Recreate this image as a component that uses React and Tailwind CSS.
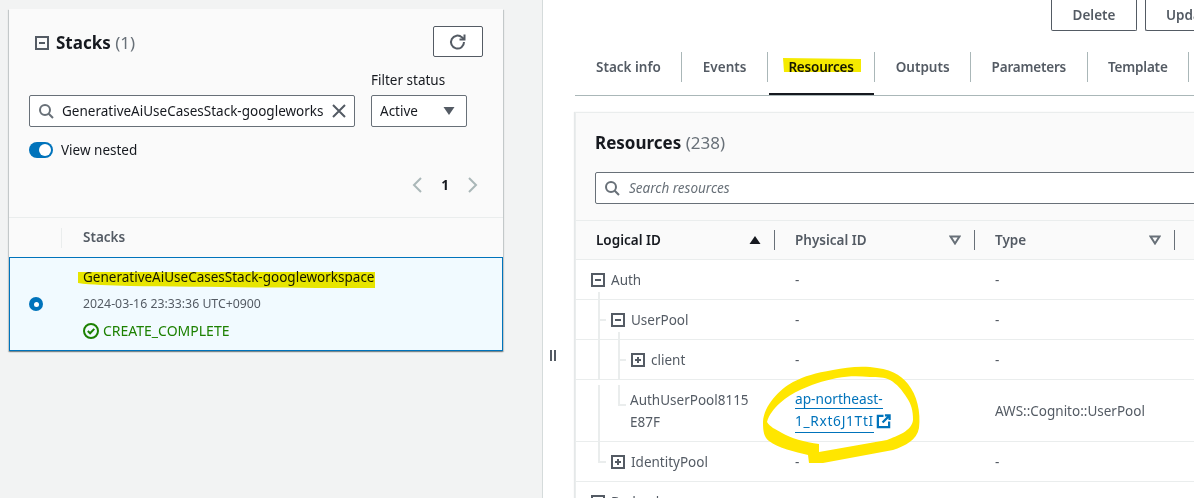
import React from "react";

const Expander = ({ open }) => (
  <svg width="14" height="14" viewBox="0 0 14 14" className="shrink-0">
    <rect x="1" y="1" width="12" height="12" fill="none" stroke="#545b64" strokeWidth="2" />
    <path d={open ? "M4 7h6" : "M4 7h6M7 4v6"} stroke="#545b64" strokeWidth="2" />
  </svg>
);

const SearchIcon = () => (
  <svg width="16" height="16" viewBox="0 0 16 16" fill="none" stroke="#687078" strokeWidth="2" className="shrink-0">
    <circle cx="7" cy="7" r="5" />
    <path d="M10.7 10.7 15 15" />
  </svg>
);

const Caret = ({ kind, color = "#545b64" }) => (
  <svg width="12" height="10" viewBox="0 0 12 10" className="shrink-0">
    {kind === "up" && <path d="M6 1 11.5 9H.5z" fill={color} />}
    {kind === "down" && <path d="M.5 1h11L6 9z" fill={color} />}
    {kind === "outline" && <path d="M1.5 1.5h9L6 8.5z" fill="none" stroke={color} strokeWidth="2" />}
  </svg>
);

const Tab = ({ label, active, last, tight }) => (
  <div className="relative h-[48px] pt-[5px]">
    <div className={`flex h-[30px] items-center px-[20.5px] text-[13.5px] font-semibold ${tight ? "tracking-[-0.2px]" : ""} ${active ? "text-[#16191f]" : "text-[#545b64]"} ${last ? "" : "border-r border-[#aab7b8]"}`}>
      {label}
    </div>
    {active && <div className="absolute bottom-0 left-px right-px h-[2px] bg-[#16191f]" />}
  </div>
);

const Th = ({ label, dark, caret, w = 200 }) => (
  <div className="flex h-[38px] shrink-0 items-center justify-between pl-[20px] pr-[14px]" style={{ width: w }}>
    <span className={`text-[13.5px] font-semibold ${dark ? "text-[#16191f]" : "text-[#545b64]"}`}>{label}</span>
    <div className="flex items-center gap-[13px]">
      <Caret kind={caret} color={caret === "up" ? "#16191f" : "#687078"} />
      <div className="-mr-[14px] h-[20px] w-px bg-[#687078]" />
    </div>
  </div>
);

const Row = ({ h = 39, indent = 0, open, label, phys = "-", type = "-", lines = [], noExpander }) => (
  <div className="flex border-b border-[#eaeded] text-[13.5px] text-[#545b64]" style={{ height: h + 1 }}>
    <div className="relative flex w-[199px] shrink-0 items-center" style={{ paddingLeft: 15 + indent }}>
      {lines.map((l, i) => (
        <div key={i} className="absolute w-[2px] bg-[#eaeded]" style={{ left: l.x, top: l.t, height: l.h }} />
      ))}
      {lines.filter((l) => l.branch).map((l, i) => (
        <div key={`b${i}`} className="absolute h-[2px] w-[8px] bg-[#eaeded]" style={{ left: l.x, top: l.branch }} />
      ))}
      {!noExpander && <Expander open={open} />}
      {noExpander ? (
        <span className="leading-[22px]">
          AuthUserPool8115
          <br />
          E87F
        </span>
      ) : (
        <span className="ml-[6px] pt-[2px]">{label}</span>
      )}
    </div>
    <div className={`flex w-[200px] shrink-0 items-center pl-[20px] ${phys === "-" ? "pt-[2px]" : ""}`}>{phys}</div>
    <div className="flex w-[200px] shrink-0 items-center pl-[20px] pt-[2px]">{type}</div>
  </div>
);

export default function App() {
  return (
    <div className="relative flex h-[498px] w-[1194px] overflow-hidden bg-white font-['Noto_Sans',sans-serif] text-[13.5px]">
      {/* Left side */}
      <div className="relative h-full w-[543px] shrink-0 border-r border-[#d5dbdb] bg-[#f2f3f3] pl-[9px] pt-[9px]">
        <div className="w-[494px] bg-[#fafafa] shadow-[0_1px_1px_0_rgba(0,28,36,0.3),1px_1px_1px_0_rgba(0,28,36,0.15),-1px_1px_1px_0_rgba(0,28,36,0.15)]">
          <div className="h-[209px] border-b border-[#eaeded] px-[20px]">
            <div className="flex items-start justify-between pt-[17px]">
              <div className="flex items-center gap-[7px] pl-[6px] pt-[4px]">
                <Expander open />
                <span className="text-[17px] font-bold leading-[26px] text-[#16191f]">
                  Stacks <span className="font-normal text-[#687078]">(1)</span>
                </span>
              </div>
              <button className="flex h-[31px] w-[50px] items-center justify-center rounded-[2px] border border-[#545b64] bg-white">
                <svg width="18" height="18" viewBox="0 0 18 18" fill="none" stroke="#545b64" strokeWidth="2">
                  <path d="M15 9a6.5 6.5 0 1 1-2-4.6L15 6" />
                  <path d="M15.5 1.5V6.5H10.5" />
                </svg>
              </button>
            </div>
            <div className="mt-[13px] flex items-end gap-[16px]">
              <div className="flex h-[32px] w-[326px] items-center rounded-[2px] border border-[#687078] bg-white pl-[8px] pr-[7px]">
                <SearchIcon />
                <span className="ml-[8px] flex-1 overflow-hidden whitespace-nowrap text-[#16191f]">GenerativeAiUseCasesStack-googleworks</span>
                <svg width="16" height="16" viewBox="0 0 16 16" stroke="#545b64" strokeWidth="2" className="shrink-0">
                  <path d="M2 2l12 12M14 2 2 14" />
                </svg>
              </div>
              <div>
                <div className="mb-[5px] leading-[20px] text-[#16191f]">Filter status</div>
                <div className="flex h-[32px] w-[96px] items-center justify-between rounded-[2px] border border-[#687078] bg-white pl-[8px] pr-[11px] text-[#16191f]">
                  Active
                  <Caret kind="down" color="#545b64" />
                </div>
              </div>
            </div>
            <div className="mt-[13px] flex items-center gap-[8px]">
              <div className="flex h-[16px] w-[24px] items-center justify-end rounded-full bg-[#0073bb] pr-[2px]">
                <div className="h-[12px] w-[12px] rounded-full bg-white" />
              </div>
              <span className="leading-[20px] text-[#16191f]">View nested</span>
            </div>
            <div className="mt-[15px] flex items-center justify-end gap-[19px] pr-[5px]">
              <svg width="10" height="16" viewBox="0 0 10 16" fill="none" stroke="#aab7b8" strokeWidth="2"><path d="M9 1 2 8l7 7" /></svg>
              <span className="font-bold leading-[20px] text-[#16191f]">1</span>
              <svg width="10" height="16" viewBox="0 0 10 16" fill="none" stroke="#aab7b8" strokeWidth="2"><path d="m1 1 7 7-7 7" /></svg>
            </div>
          </div>
          <div className="flex h-[39px] items-center">
            <div className="h-[20px] w-[53px] border-r border-[#eaeded]" />
            <span className="pl-[21px] text-[13.5px] font-semibold text-[#545b64]">Stacks</span>
          </div>
          <div className="flex h-[94px] items-center border border-[#0073bb] bg-[#f1faff]">
            <div className="ml-[19px] flex h-[14px] w-[14px] items-center justify-center rounded-full bg-[#0073bb]">
              <div className="h-[5px] w-[5px] rounded-full bg-white" />
            </div>
            <div className="ml-[40px] flex flex-col">
              <span className="leading-[20px] text-[#16191f]">GenerativeAiUseCasesStack-googleworkspace</span>
              <span className="mt-[7px] text-[12.3px] leading-[20px] text-[#545b64]">2024-03-16 23:33:36 UTC+0900</span>
              <span className="mt-[7px] flex items-center gap-[4px] text-[14px] leading-[20px] text-[#1d8102]">
                <svg width="16" height="16" viewBox="0 0 16 16" fill="none" stroke="#1d8102" strokeWidth="2">
                  <circle cx="8" cy="8" r="7" />
                  <path d="m4.8 8 2.3 2.3 4.2-4.4" />
                </svg>
                CREATE_COMPLETE
              </span>
            </div>
          </div>
        </div>
        <div className="absolute left-[550px] top-[350px] z-10 flex gap-[2px]">
          <div className="h-[11px] w-[2px] bg-[#545b64]" />
          <div className="h-[11px] w-[2px] bg-[#545b64]" />
        </div>
      </div>

      {/* Right side */}
      <div className="min-w-0 flex-1 pl-[32px]">
        <div className="flex justify-end gap-[8px]" style={{ marginRight: -31 }}>
          <button className="h-[31px] w-[86px] rounded-b-[2px] border border-t-0 border-[#545b64] bg-white text-[13.5px] font-semibold text-[#545b64]">Delete</button>
          <button className="h-[31px] w-[80px] rounded-b-[2px] border border-t-0 border-r-0 border-[#545b64] bg-white pl-[20px] text-left text-[13.5px] font-semibold text-[#545b64]">Update</button>
        </div>
        <div className="mt-[16px] flex h-[49px] w-[640px] border-b border-[#aab7b8]">
          <div className="flex pl-[0.5px]">
            <Tab label="Stack info" />
            <Tab label="Events" />
            <Tab label="Resources" active tight />
            <Tab label="Outputs" />
            <Tab label="Parameters" tight />
            <Tab label="Template" tight />
          </div>
        </div>
        <div className="mt-[16px] w-[640px] border-l border-t border-[#eaeded] shadow-[-1px_0_1px_rgba(0,28,36,0.1)]">
          <div className="h-[108px] border-b border-[#eaeded] bg-[#fafafa] pl-[19px] pt-[17px]">
            <div className="text-[17px] font-bold leading-[26px] text-[#16191f]">
              Resources <span className="font-normal text-[#687078]">(238)</span>
            </div>
            <div className="mt-[16px] flex h-[32px] w-[620px] items-center rounded-[2px] border border-[#687078] bg-white pl-[8px]">
              <SearchIcon />
              <span className="ml-[9px] italic text-[#687078]">Search resources</span>
            </div>
          </div>
          <div className="flex h-[39px] border-b border-[#eaeded] bg-[#fafafa]">
            <Th label="Logical ID" dark caret="up" w={199} />
            <Th label="Physical ID" caret="outline" />
            <Th label="Type" caret="outline" />
          </div>
          <Row indent={0} open label="Auth" lines={[{ x: 22, t: 32, h: 8 }]} />
          <Row indent={20} open label="UserPool" lines={[{ x: 22, t: 0, h: 40, branch: 19 }, { x: 42, t: 32, h: 8 }]} />
          <Row indent={40} label="client" lines={[{ x: 22, t: 0, h: 40 }, { x: 42, t: 0, h: 40, branch: 19 }]} />
          <Row
            h={61}
            indent={39}
            noExpander
            phys={
              <span className="text-[13.7px] leading-[22px] text-[#0073bb]">
                <span className="border-b border-[#0073bb]">ap-northeast-</span>
                <br />
                <span className="inline-flex items-center">
                  <span className="border-b border-[#0073bb] tracking-[0.7px]">1_Rxt6J1TtI</span>
                  <svg width="15" height="15" viewBox="0 0 16 16" fill="none" stroke="#0073bb" strokeWidth="2.4" className="ml-[2px]">
                    <path d="M8 2H2v12h12V8" />
                    <path d="M7 9l7-7M9.5 1.5h5v5" />
                  </svg>
                </span>
              </span>
            }
            type="AWS::Cognito::UserPool"
            lines={[{ x: 22, t: 5, h: 56 }, { x: 42, t: 5, h: 20, branch: 24 }]}
          />
          <Row indent={20} label="IdentityPool" lines={[{ x: 22, t: 0, h: 20, branch: 19 }]} />
          <Row indent={0} open label="Bedrock" />
        </div>
      </div>

      {/* Hand-drawn highlights over the page */}
      <svg width="1194" height="498" viewBox="0 0 1194 498" className="pointer-events-none absolute left-0 top-0">
        <g className="mix-blend-multiply">
          <path d="M78 272H375V288C300 288 200 287 130 286C110 285 90 285 78 283Z" fill="#f5ea00" />
          <path d="M783 58 861 59V72H784Z" fill="#f5ea00" />
        </g>
        <path
          fillRule="evenodd"
          fill="#ffe600"
          d="M763 422C763 432 764 437 769 441C778 448 795 452 808 455L809 463L823 463L893 450C905 446 917 440 919 428C921 412 917 395 908 384C900 374 890 369 870 367C855 366 845 368 833 370C815 373 805 376 793 382C780 389 764 405 763 422ZM767 422C770 427 775 429 782 433C790 438 805 442 819 444L819 452L887 440C897 436 912 431 913 420C913 410 911 404 907 398C902 390 897 384 890 380C884 377 878 377 870 377C858 376 848 376 837 378C822 381 811 385 800 390C787 396 771 408 767 422Z"
        />
      </svg>
    </div>
  );
}
